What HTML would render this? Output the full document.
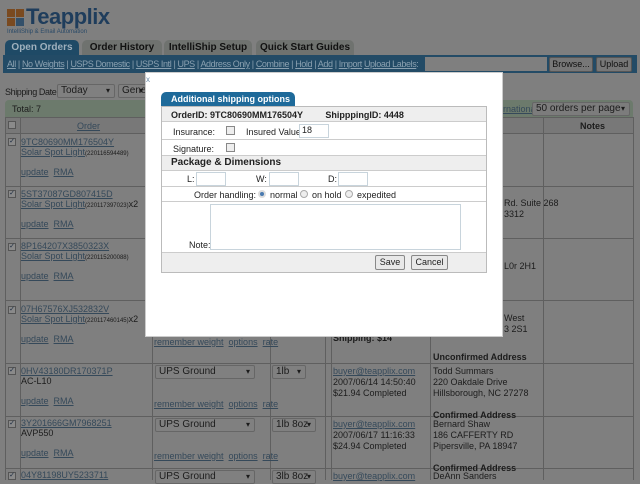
<!DOCTYPE html>
<html style="background:#7f7f7f"><head><style>
*{margin:0;padding:0;box-sizing:border-box}
html,body{background:#7f7f7f}
body{width:640px;height:480px;font-family:"Liberation Sans",sans-serif;font-size:9px;color:#1c1c1c;position:relative;overflow:hidden}
.a{position:absolute;white-space:nowrap}
a,.lk{color:#35495a;text-decoration:underline}
.tab{position:absolute;top:40px;height:16px;border-radius:5px 5px 0 0;font-weight:bold;font-size:10px;text-align:center;line-height:16px;background:#6f726f;color:#111}
.vl{position:absolute;width:1px;background:#5f5f5f}
.hl{position:absolute;height:1px;background:#5f5f5f;left:5px;width:628px}
.cb{position:absolute;width:8px;height:8px;border:1px solid #555;background:#8a8a8a;font-size:7px;line-height:6px;text-align:center;color:#1a2a40}
.sel{position:absolute;height:14px;border:1px solid #666;background:#808080;border-radius:2px;font-size:10px;line-height:12px;padding-left:3px;white-space:nowrap}
.sel:after{content:"▾";position:absolute;right:4px;font-size:8px}
.m{position:absolute;background:#fff;left:145px;top:72px;width:358px;height:265px;border:1px solid #ccc}
.m *{color:#222}
.row{position:absolute;left:16px;width:324px;border-bottom:1px solid #ccc;font-size:9px;white-space:nowrap}
.in{position:absolute;border:1px solid #c8d4dc;background:#fff;height:14px}
.mcb{position:absolute;width:9px;height:9px;border:1px solid #888;background:#eee}
.rd{position:absolute;width:8px;height:8px;border-radius:50%;border:1px solid #aaa;background:#eee}
.btn{position:absolute;height:15px;border:1px solid #888;background:#e8e8e8;border-radius:2px;font-size:9px;text-align:center;line-height:13px}
</style></head><body>
<div class="a" style="left:7px;top:9px;width:8px;height:8px;background:#7a4a20"></div>
<div class="a" style="left:16px;top:9px;width:8px;height:8px;background:#7a4a20"></div>
<div class="a" style="left:7px;top:18px;width:8px;height:8px;background:#7a4a20"></div>
<div class="a" style="left:16px;top:18px;width:8px;height:8px;background:#33506a"></div>
<div class="a" style="left:26px;top:4px;font-size:22px;font-weight:bold;color:#1f3d5c;letter-spacing:-0.5px">Teapplix</div>
<div class="a" style="left:7px;top:29px;font-size:6px;color:#2a4a68">IntelliShip &amp; Email Automation</div>
<div class="tab" style="left:5px;width:74px;background:#1f4a66;color:#9fb0bd">Open Orders</div>
<div class="tab" style="left:82px;width:80px">Order History</div>
<div class="tab" style="left:164px;width:88px">IntelliShip Setup</div>
<div class="tab" style="left:256px;width:98px">Quick Start Guides</div>
<div class="a" style="left:3px;top:55px;width:634px;height:18px;background:#234b66"></div>
<div class="a" style="left:7px;top:59px;color:#8aa0b0;font-size:9px;letter-spacing:-0.4px"><u>All</u> | <u>No Weights</u> | <u>USPS Domestic</u> | <u>USPS Intl</u> | <u>UPS</u> | <u>Address Only</u> | <u>Combine</u> | <u>Hold</u> | <u>Add</u> | <u>Import</u> <u>Upload Labels</u>:</div>
<div class="a" style="left:425px;top:57px;width:122px;height:14px;background:#7f7f7f"></div>
<div class="btn" style="left:549px;top:57px;width:44px;background:#777;border-color:#555;color:#111">Browse...</div>
<div class="btn" style="left:596px;top:57px;width:36px;background:#777;border-color:#555;color:#111">Upload</div>
<div class="a" style="left:5px;top:87px;letter-spacing:-0.4px">Shipping Date:</div>
<div class="sel" style="left:57px;top:84px;width:58px">Today</div>
<div class="sel" style="left:118px;top:84px;width:30px">Gener</div>
<div class="a" style="left:5px;top:100px;width:628px;height:17px;background:#6c7a6c;border-radius:4px 4px 0 0"></div>
<div class="a" style="left:12px;top:104px">Total: 7</div>
<div class="a" style="left:503px;top:104px"><a>rnational</a></div>
<div class="sel" style="left:532px;top:102px;width:98px;background:#7c7c7c">50 orders per page</div>
<div class="a" style="left:5px;top:117px;width:628px;height:16px;background:#787878"></div>
<div class="a" style="left:77px;top:121px"><a>Order</a></div>
<div class="a" style="left:580px;top:121px;font-weight:bold">Notes</div>
<div class="cb" style="left:8px;top:121px"></div>
<div class="hl" style="top:117px"></div><div class="hl" style="top:133px"></div><div class="hl" style="top:186px"></div><div class="hl" style="top:238px"></div><div class="hl" style="top:300px"></div><div class="hl" style="top:363px"></div><div class="hl" style="top:416px"></div><div class="hl" style="top:468px"></div>
<div class="vl" style="left:5px;top:117px;height:363px"></div>
<div class="vl" style="left:20px;top:117px;height:363px"></div>
<div class="vl" style="left:152px;top:117px;height:363px"></div>
<div class="vl" style="left:270px;top:117px;height:363px"></div>
<div class="vl" style="left:325px;top:117px;height:363px"></div>
<div class="vl" style="left:331px;top:117px;height:363px"></div>
<div class="vl" style="left:430px;top:117px;height:363px"></div>
<div class="vl" style="left:543px;top:117px;height:363px"></div>
<div class="vl" style="left:633px;top:117px;height:363px"></div>
<div class="cb" style="left:8px;top:138px">✓</div><div class="a" style="left:21px;top:137px"><a>9TC80690MM176504Y</a><br><a>Solar Spot Light</a><span style="font-size:6px">(220116594489)</span><br><br><a>update</a> &nbsp;<a>RMA</a></div>
<div class="cb" style="left:8px;top:190px">✓</div><div class="a" style="left:21px;top:189px"><a>5ST37087GD807415D</a><br><a>Solar Spot Light</a><span style="font-size:6px">(220117397023)</span>x2<br><br><a>update</a> &nbsp;<a>RMA</a></div>
<div class="cb" style="left:8px;top:243px">✓</div><div class="a" style="left:21px;top:241px"><a>8P164207X3850323X</a><br><a>Solar Spot Light</a><span style="font-size:6px">(220115200088)</span><br><br><a>update</a> &nbsp;<a>RMA</a></div>
<div class="cb" style="left:8px;top:306px">✓</div><div class="a" style="left:21px;top:304px"><a>07H67576XJ532832V</a><br><a>Solar Spot Light</a><span style="font-size:6px">(220117460145)</span>x2<br><br><a>update</a> &nbsp;<a>RMA</a></div>
<div class="cb" style="left:8px;top:367px">✓</div><div class="a" style="left:21px;top:366px"><a>0HV43180DR170371P</a><br>AC-L10<br><br><a>update</a> &nbsp;<a>RMA</a></div>
<div class="cb" style="left:8px;top:420px">✓</div><div class="a" style="left:21px;top:418px"><a>3Y201666GM7968251</a><br>AVP550<br><br><a>update</a> &nbsp;<a>RMA</a></div>
<div class="cb" style="left:8px;top:472px">✓</div><div class="a" style="left:21px;top:470px"><a>04Y81198UY5233711</a></div>
<div class="a" style="left:154px;top:337px"><a>remember weight</a> &nbsp;<a>options</a> &nbsp;<a>rate</a></div>
<div class="a" style="left:333px;top:333px;font-weight:bold">Shipping: $14</div>
<div class="a" style="left:433px;top:352px;font-weight:bold">Unconfirmed Address</div>
<div class="sel" style="left:155px;top:365px;width:100px">UPS Ground</div><div class="sel" style="left:272px;top:365px;width:34px">1lb</div>
<div class="a" style="left:154px;top:399px"><a>remember weight</a> &nbsp;<a>options</a> &nbsp;<a>rate</a></div>
<div class="a" style="left:333px;top:366px;line-height:11px"><a>buyer@teapplix.com</a><br>2007/06/14 14:50:40<br>$21.94 Completed</div>
<div class="a" style="left:433px;top:366px;line-height:11px">Todd Summars<br>220 Oakdale Drive<br>Hillsborough, NC 27278<br><br><b>Confirmed Address</b></div>
<div class="sel" style="left:155px;top:418px;width:100px">UPS Ground</div><div class="sel" style="left:272px;top:418px;width:44px">1lb 8oz</div>
<div class="a" style="left:154px;top:451px"><a>remember weight</a> &nbsp;<a>options</a> &nbsp;<a>rate</a></div>
<div class="a" style="left:333px;top:419px;line-height:11px"><a>buyer@teapplix.com</a><br>2007/06/17 11:16:33<br>$24.94 Completed</div>
<div class="a" style="left:433px;top:419px;line-height:11px">Bernard Shaw<br>186 CAFFERTY RD<br>Pipersville, PA 18947<br><br><b>Confirmed Address</b></div>
<div class="sel" style="left:155px;top:470px;width:100px">UPS Ground</div><div class="sel" style="left:272px;top:470px;width:44px">3lb 8oz</div>
<div class="a" style="left:333px;top:471px"><a>buyer@teapplix.com</a></div>
<div class="a" style="left:433px;top:471px">DeAnn Sanders</div>
<div class="a" style="left:504px;top:198px;line-height:11px">Rd. Suite 268<br>3312</div>
<div class="a" style="left:504px;top:261px">L0r 2H1</div>
<div class="a" style="left:504px;top:313px;line-height:11px">West<br>3 2S1</div>
<div class="m">
<div class="a" style="left:0;top:2px;font-size:8px;color:#6a8aa8">x</div>
<div class="a" style="left:15px;top:19px;width:134px;height:15px;background:#1e6a9a;border-radius:5px 5px 0 0;font-weight:bold;font-size:9px;line-height:15px;padding-left:10px"><span style="color:#fff">Additional shipping options</span></div>
<div class="a" style="left:15px;top:33px;width:326px;height:167px;border:1px solid #bbb"></div>
<div class="row" style="top:34px;height:15px;background:#eee;font-weight:bold;padding:3px 0 0 9px">OrderID: 9TC80690MM176504Y &nbsp; &nbsp; &nbsp; &nbsp; ShipppingID: 4448</div>
<div class="row" style="top:49px;height:18px"><span class="a" style="left:11px;top:5px">Insurance:</span><span class="mcb" style="left:64px;top:4px"></span><span class="a" style="left:84px;top:5px">Insured Value:</span><span class="in" style="left:137px;top:2px;width:30px;padding-left:2px;font-size:9px">18</span></div>
<div class="row" style="top:67px;height:16px"><span class="a" style="left:11px;top:4px">Signature:</span><span class="mcb" style="left:64px;top:3px"></span></div>
<div class="row" style="top:83px;height:15px;background:#eee;font-weight:bold;font-size:10px;padding:1px 0 0 9px">Package &amp; Dimensions</div>
<div class="row" style="top:98px;height:16px"><span class="a" style="left:25px;top:3px">L:</span><span class="in" style="left:34px;top:1px;width:30px"></span><span class="a" style="left:94px;top:3px">W:</span><span class="in" style="left:107px;top:1px;width:30px"></span><span class="a" style="left:166px;top:3px">D:</span><span class="in" style="left:176px;top:1px;width:30px"></span></div>
<div class="row" style="top:114px;height:15px"><span class="a" style="left:32px;top:3px">Order handling:</span><span class="rd" style="left:96px;top:3px;background:#4a7ab0;border:2px solid #ddd"></span><span class="a" style="left:108px;top:3px">normal</span><span class="rd" style="left:138px;top:3px"></span><span class="a" style="left:150px;top:3px">on hold</span><span class="rd" style="left:183px;top:3px"></span><span class="a" style="left:195px;top:3px">expedited</span></div>
<div class="row" style="top:129px;height:51px"><span class="a" style="left:27px;top:38px">Note:</span><span class="in" style="left:48px;top:2px;width:251px;height:46px"></span></div>
<div class="row" style="top:180px;height:19px;background:#eee;border:0"></div>
<div class="btn" style="left:229px;top:182px;width:30px">Save</div>
<div class="btn" style="left:265px;top:182px;width:37px">Cancel</div>
</div>
</body></html>
